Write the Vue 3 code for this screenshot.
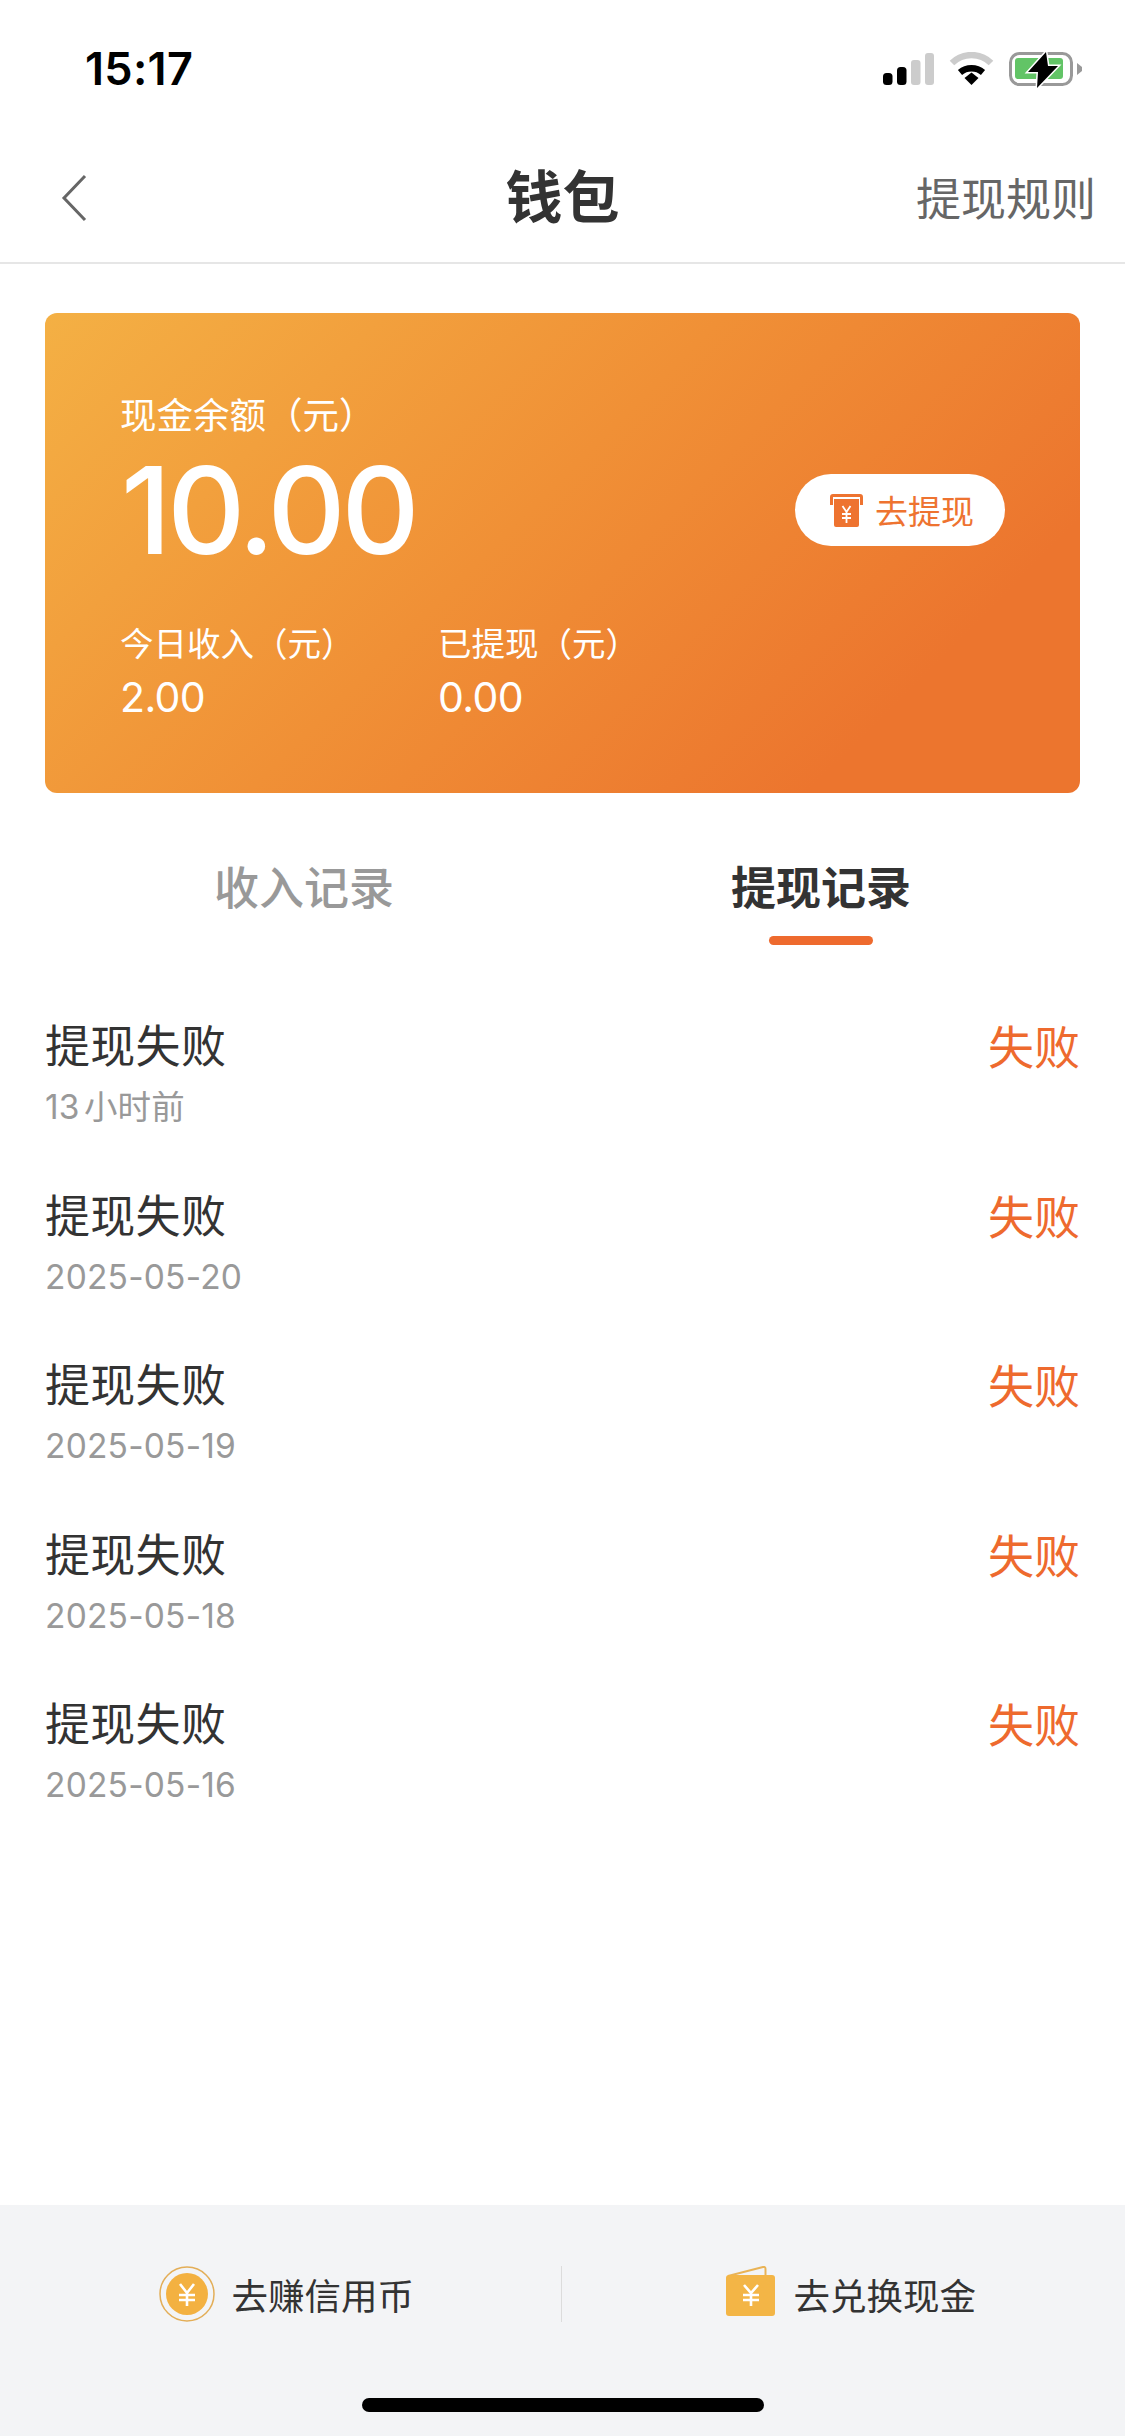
<script setup>
const records = ['13小时前', '2025-05-20', '2025-05-19', '2025-05-18', '2025-05-16']
</script>

<template>
  <div class="page">
    <div class="status">
      <span class="time">15:17</span>
      <div class="status-icons">
        <svg class="signal" width="51" height="32" viewBox="0 0 51 32">
          <rect x="0" y="20" width="9.5" height="12" rx="3.5" fill="#000" />
          <rect x="14" y="14" width="9.5" height="18" rx="3.5" fill="#000" />
          <rect x="28" y="7" width="9.5" height="25" rx="3" fill="#ccc" />
          <rect x="42" y="0" width="9" height="32" rx="3" fill="#ccc" />
        </svg>
        <svg width="45" height="34" viewBox="0 0 45 34">
          <path d="M3 11 A28 28 0 0 1 42 11" fill="none" stroke="#ccc" stroke-width="6.5" />
          <path d="M11 20.5 A18 18 0 0 1 34 20.5" fill="none" stroke="#000" stroke-width="6.5" />
          <path d="M15.5 26 L22.5 20.5 L29.5 26 L22.5 33 Z" fill="#000" />
        </svg>
        <svg width="73" height="36" viewBox="0 0 73 36">
          <rect x="1.5" y="1.5" width="61" height="31" rx="9" fill="none" stroke="#999" stroke-width="3" />
          <rect x="6" y="6" width="48" height="21" rx="3" fill="#62c466" />
          <path d="M68 11 L73 15 V19 L68 23 Z" fill="#999" />
          <path d="M37 0 L19 20 H29 L28 36 L49 14 H39 Z" fill="#000" stroke="#fff" stroke-width="3" paint-order="stroke" />
        </svg>
      </div>
    </div>

    <header class="nav">
      <svg class="back" width="26" height="48" viewBox="0 0 26 48">
        <path d="M24 2 L3 24 L24 46" fill="none" stroke="#666" stroke-width="3" />
      </svg>
      <h1 class="title">钱包</h1>
      <span class="rule">提现规则</span>
    </header>

    <section class="card">
      <div class="balance-row">
        <div>
          <div class="label">现金余额（元）</div>
          <div class="amount">10.00</div>
        </div>
        <div class="withdraw">
          <svg width="33" height="33" viewBox="0 0 33 33">
            <path d="M1.5 11 V3 Q1.5 1.5 3 1.5 H30 Q31.5 1.5 31.5 3 V11" fill="none" stroke="#ee7330" stroke-width="3" />
            <path d="M4 5 H29 V31 Q29 33 27 33 H6 Q4 33 4 31 Z" fill="#ee7330" />
            <path d="M12.5 12 L16.5 18 L20.5 12 M12 20 H21 M12 24 H21 M16.5 18 V29" fill="none" stroke="#fff" stroke-width="1.8" />
          </svg>
          <span>去提现</span>
        </div>
      </div>
      <div class="stats">
        <div class="stat stat-first">
          <div class="label small">今日收入（元）</div>
          <div class="stat-val">2.00</div>
        </div>
        <div class="stat">
          <div class="label small">已提现（元）</div>
          <div class="stat-val">0.00</div>
        </div>
      </div>
    </section>

    <nav class="tabs">
      <div class="tab">收入记录</div>
      <div class="tab active">提现记录<i class="underline"></i></div>
    </nav>

    <ul class="list">
      <li v-for="r in records" :key="r" class="row">
        <div>
          <div class="row-title">提现失败</div>
          <div class="row-date">{{ r }}</div>
        </div>
        <div class="row-status">失败</div>
      </li>
    </ul>

    <footer class="footer">
      <div class="actions">
        <div class="action coin">
          <svg width="56" height="56" viewBox="0 0 56 56">
            <circle cx="28" cy="28" r="27" fill="none" stroke="#e3ae58" stroke-width="1.5" />
            <circle cx="28" cy="28" r="21" fill="#f3b141" />
            <path d="M21 18 L28 27 L35 18 M20 29 H36 M20 34 H36 M28 27 V40" fill="none" stroke="#fff" stroke-width="2.6" />
          </svg>
          <span>去赚信用币</span>
        </div>
        <div class="divider"></div>
        <div class="action wallet">
          <svg width="49" height="50" viewBox="0 0 49 50">
            <path d="M2 10 L37 1 Q39.500 0.500 39.500 3 V12" fill="none" stroke="#e9b356" stroke-width="2" />
            <rect x="0" y="9" width="49" height="41" rx="3" fill="#f3b546" />
            <path d="M18 19 L25 27 L32 19 M17 29 H33 M17 34 H33 M25 27 V40" fill="none" stroke="#fff" stroke-width="2.6" />
          </svg>
          <span>去兑换现金</span>
        </div>
      </div>
      <div class="home"></div>
    </footer>
  </div>
</template>

<style>
html, body { margin: 0; background: #fff; }
</style>

<style scoped>
.page {
  width: 1125px;
  height: 2436px;
  display: flex;
  flex-direction: column;
  background: #fff;
  overflow: hidden;
  font-family: "Inter", "Noto Sans CJK SC", sans-serif;
  color: #333;
}
.status {
  height: 132px;
  flex: none;
  box-sizing: border-box;
  padding: 46px 43px 0 85px;
  display: flex;
  justify-content: space-between;
  align-items: flex-start;
}
.time { font-size: 45px; font-weight: 600; line-height: 46px; color: #000; letter-spacing: 0.3px; }
.status-icons { display: flex; align-items: flex-start; gap: 15px; padding-top: 6px; }
.signal { margin-top: 1px; }
.nav {
  height: 130px;
  flex: none;
  position: relative;
  display: flex;
  align-items: center;
  justify-content: center;
  border-bottom: 2px solid #e6e6e6;
}
.back { position: absolute; left: 61px; top: 42px; }
.title { margin: 0; font-size: 57px; font-weight: 700; color: #333; line-height: 1; }
.rule { position: absolute; right: 29px; top: 38px; font-size: 45px; line-height: 60px; color: #666; }
.card {
  margin: 49px 45px 0;
  height: 480px;
  flex: none;
  box-sizing: border-box;
  padding: 78px 75px 0 75px;
  border-radius: 12px;
  background: linear-gradient(135deg, #f4b044 0%, #f09036 45%, #ec752e 82%);
  color: #fff;
}
.balance-row { display: flex; justify-content: space-between; align-items: flex-end; }
.label { font-size: 36.5px; line-height: 50px; white-space: nowrap; }
.label.small { font-size: 33.5px; line-height: 46px; }
.amount { font-size: 121px; line-height: 118px; font-weight: 500; letter-spacing: -4px; margin-top: 10px; margin-left: 1px; }
.withdraw {
  width: 210px;
  height: 72px;
  border-radius: 36px;
  background: #fff;
  color: #ee7330;
  font-size: 33px;
  display: flex;
  align-items: center;
  justify-content: center;
  gap: 12px;
  margin-bottom: 23px;
  padding-left: 4px;
  box-sizing: border-box;
}
.stats { display: flex; margin-top: 52px; }
.stat-first { width: 318px; }
.stat-val { font-size: 41px; line-height: 56px; margin-top: 2px; letter-spacing: -0.6px; }
.tabs { display: flex; height: 152px; flex: none; }
.tab {
  position: relative;
  text-align: center;
  font-size: 45px;
  font-weight: 500;
  color: #999;
  padding-top: 61px;
  line-height: 70px;
  box-sizing: border-box;
}
.tab:first-child { flex: 0 0 608px; }
.tab:last-child { flex: 0 0 426px; }
.tab.active { color: #333; font-weight: 700; }
.underline {
  position: absolute;
  left: 50%;
  top: 143px;
  width: 104px;
  height: 9px;
  margin-left: -52px;
  border-radius: 5px;
  background: #ee6a2e;
}
.list { list-style: none; margin: 0; padding: 72px 45px 0; }
.row { display: flex; justify-content: space-between; height: 169.5px; }
.row-title { font-size: 45px; line-height: 60px; color: #333; letter-spacing: 0.3px; }
.row-date {
  font-size: 33.5px;
  line-height: 48px;
  color: #999;
  margin-top: 6px;
  letter-spacing: 0.2px;
  text-autospace: normal;
}
.row-status { font-size: 46px; line-height: 60px; color: #ee6a2e; }
.footer {
  margin-top: auto;
  height: 231px;
  flex: none;
  background: #f3f4f6;
  display: flex;
  flex-direction: column;
  align-items: center;
}
.actions { display: flex; align-items: center; width: 100%; height: 178px; }
.action {
  flex: 1;
  box-sizing: border-box;
  padding-left: 12px;
  display: flex;
  align-items: center;
  justify-content: center;
  font-size: 36.5px;
  color: #333;
}
.coin { gap: 17px; }
.wallet { gap: 19px; padding-left: 15px; }
.wallet svg { margin-bottom: 6px; }
.divider { width: 1px; height: 56px; background: #dcdcdc; }
.home { width: 402px; height: 14px; border-radius: 7px; background: #000; margin-top: 15px; }
</style>
